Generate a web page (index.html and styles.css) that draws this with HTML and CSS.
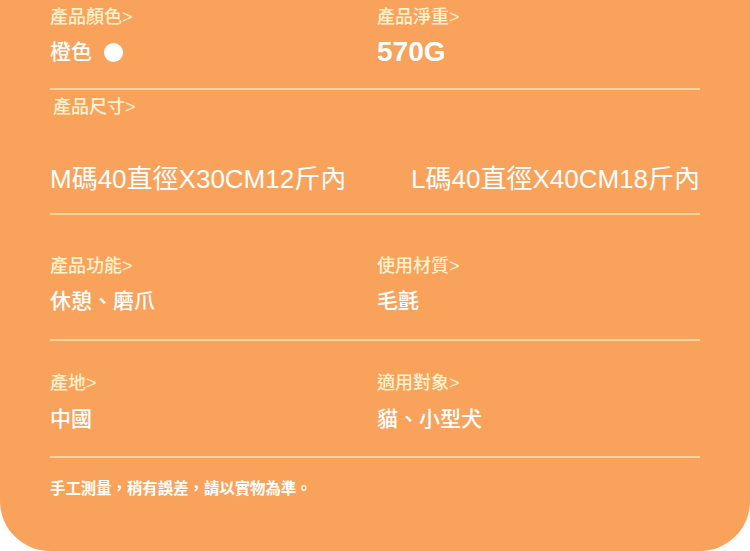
FILE: index.html
```html
<!DOCTYPE html>
<html lang="zh-Hant">
<head>
<meta charset="utf-8">
<link rel="stylesheet" href="styles.css">
</head>
<body>
<div class="sheet">
  <div class="row row-top">
    <div class="cell">
      <div class="label">產品顏色&gt;</div>
      <div class="value">橙色 <span class="dot"></span></div>
    </div>
    <div class="cell">
      <div class="label">產品淨重&gt;</div>
      <div class="value latin">570G</div>
    </div>
  </div>
  <div class="row-size">
    <div class="label label-size">產品尺寸&gt;</div>
    <div class="sizes">
      <span>M碼40直徑X30CM12斤內</span>
      <span>L碼40直徑X40CM18斤內</span>
    </div>
  </div>
  <div class="row row-mid">
    <div class="cell">
      <div class="label">產品功能&gt;</div>
      <div class="value">休憩、磨爪</div>
    </div>
    <div class="cell">
      <div class="label">使用材質&gt;</div>
      <div class="value">毛氈</div>
    </div>
  </div>
  <div class="row row-mid2">
    <div class="cell">
      <div class="label">產地&gt;</div>
      <div class="value value-tight">中國</div>
    </div>
    <div class="cell">
      <div class="label">適用對象&gt;</div>
      <div class="value value-tight">貓、小型犬</div>
    </div>
  </div>
  <div class="note">手工測量，稍有誤差，請以實物為準。</div>
</div>
</body>
</html>
```

FILE: styles.css
```css
html, body {
  margin: 0;
  padding: 0;
  background: #ffffff;
}

.sheet {
  width: 750px;
  height: 551px;
  box-sizing: border-box;
  background: #f9a25c;
  border-radius: 0 0 50px 50px;
  padding: 0 50px;
  font-family: "Liberation Sans", "Noto Sans CJK TC", sans-serif;
  color: #ffffff;
}

.row {
  display: grid;
  grid-template-columns: 327px 1fr;
  border-bottom: 2px solid #fcd2a2;
  box-sizing: border-box;
}

.label {
  font-size: 18px;
  line-height: 22px;
  font-weight: 500;
  color: #fff2cf;
}

.value {
  margin-top: 10px;
  height: 28px;
  font-size: 21px;
  line-height: 28px;
  font-weight: 500;
  color: #ffffff;
  display: flex;
  align-items: center;
}

.value-tight {
  margin-top: 11px;
}

.latin {
  font-weight: bold;
  font-size: 28px;
}

.dot {
  display: inline-block;
  width: 19px;
  height: 19px;
  border-radius: 50%;
  background: #ffffff;
  margin-left: 12px;
}

.row-top {
  height: 90px;
  padding-top: 6px;
}

.row-size {
  height: 125px;
  box-sizing: border-box;
  border-bottom: 2px solid #fcd2a2;
  padding-top: 6px;
}

.label-size {
  padding-left: 3px;
}

.sizes {
  margin-top: 45px;
  display: flex;
  justify-content: space-between;
  font-size: 26px;
  line-height: 32px;
}

.row-mid {
  height: 126px;
  padding-top: 40px;
}

.row-mid2 {
  height: 117px;
  padding-top: 31px;
}

.note {
  padding-top: 21px;
  font-size: 15.4px;
  line-height: 20px;
  font-weight: bold;
}
```
